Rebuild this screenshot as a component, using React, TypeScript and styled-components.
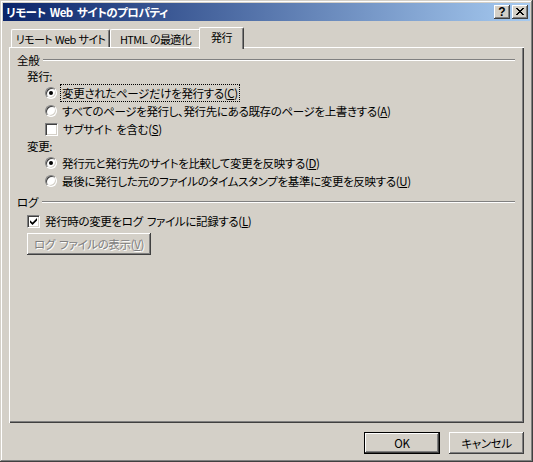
import styled, { createGlobalStyle } from "styled-components";

const GlobalStyle = createGlobalStyle`
  html, body {
    margin: 0;
    padding: 0;
    background: #d4d0c8;
  }
  body {
    font-family: "Noto Sans CJK JP", "Noto Sans", sans-serif;
    font-size: 11.5px;
    letter-spacing: -0.35px;
    word-spacing: 2px;
    font-feature-settings: "palt";
    color: #000;
  }
`;

const Window = styled.div`
  width: 533px;
  height: 462px;
  box-sizing: border-box;
  padding: 3px;
  background: #d4d0c8;
  box-shadow: inset -1px -1px #404040, inset 1px 1px #d4d0c8,
    inset -2px -2px #808080, inset 2px 2px #ffffff;
  display: flex;
  flex-direction: column;
`;

const TitleBar = styled.div`
  height: 18px;
  display: flex;
  align-items: center;
  padding: 0 2px 0 3px;
  background: linear-gradient(to right, #0a246a, #a6caf0);
`;

const TitleText = styled.span`
  flex: 1;
  color: #ffffff;
  font-weight: bold;
  font-size: 11.5px;
  letter-spacing: -0.5px;
  line-height: 18px;
  white-space: nowrap;
`;

const CaptionButtons = styled.div`
  display: flex;
  gap: 2px;
`;

const CaptionButton = styled.div`
  width: 16px;
  height: 14px;
  box-sizing: border-box;
  background: #d4d0c8;
  box-shadow: inset -1px -1px #404040, inset 1px 1px #ffffff,
    inset -2px -2px #808080, inset 2px 2px #d4d0c8;
  display: flex;
  align-items: center;
  justify-content: center;
  font-family: "Liberation Sans", sans-serif;
  font-weight: bold;
  font-size: 12px;
  letter-spacing: 0;
  line-height: 14px;
  padding-bottom: 1px;
`;

const Body = styled.div`
  flex: 1;
  display: flex;
  flex-direction: column;
  padding: 6px 6px 0 6px;
`;

const TabStrip = styled.div`
  display: flex;
  align-items: flex-end;
  height: 20px;
  padding-left: 2px;
`;

const Tab = styled.div<{ $width: number; $active?: boolean }>`
  position: relative;
  z-index: ${(p) => (p.$active ? 2 : 1)};
  width: ${(p) => p.$width}px;
  height: ${(p) => (p.$active ? 22 : 18)}px;
  margin: 0 ${(p) => (p.$active ? -2 : 0)}px ${(p) => (p.$active ? -2 : 0)}px;
  box-sizing: border-box;
  padding-bottom: ${(p) => (p.$active ? 3 : 0)}px;
  background: #d4d0c8;
  border-left: 1px solid #ffffff;
  border-top: 1px solid #ffffff;
  border-right: 1px solid #404040;
  border-radius: 2px 2px 0 0;
  box-shadow: inset -1px 0 #808080;
  display: flex;
  align-items: center;
  justify-content: center;
  overflow: hidden;
  white-space: nowrap;
  line-height: 16px;
  font-size: 11px;
  letter-spacing: -0.6px;
  word-spacing: 1px;
`;

const Panel = styled.div`
  flex: 1;
  box-sizing: border-box;
  padding: 5px 9px 0 8px;
  box-shadow: inset 1px 1px #ffffff, inset -1px -1px #404040,
    inset -2px -2px #808080;
  display: flex;
  flex-direction: column;
  align-items: flex-start;
`;

const GroupHeader = styled.div<{ $top?: number }>`
  align-self: stretch;
  display: flex;
  align-items: center;
  height: 16px;
  line-height: 16px;
  margin-top: ${(p) => p.$top ?? 0}px;
`;

const GroupRule = styled.span`
  flex: 1;
  height: 0;
  margin-left: 4px;
  border-top: 1px solid #808080;
  border-bottom: 1px solid #ffffff;
`;

const SubLabel = styled.div`
  height: 16px;
  line-height: 16px;
  padding-left: 10px;
`;

const OptionRow = styled.div<{ $indent: number; $top?: number }>`
  display: flex;
  align-items: center;
  gap: 5px;
  height: 18px;
  line-height: 16px;
  padding-left: ${(p) => p.$indent}px;
  margin-top: ${(p) => p.$top ?? 0}px;
  white-space: nowrap;
`;

const RadioMark = styled.span<{ $checked?: boolean }>`
  flex: none;
  width: 12px;
  height: 12px;
  box-sizing: border-box;
  border-radius: 50%;
  border: 1px solid;
  border-color: #808080 #ffffff #ffffff #808080;
  background: #ffffff;
  box-shadow: inset 1px 1px #404040, inset -1px -1px #d4d0c8;
  display: flex;
  align-items: center;
  justify-content: center;
  &::after {
    content: "";
    display: ${(p) => (p.$checked ? "block" : "none")};
    width: 4px;
    height: 4px;
    border-radius: 50%;
    background: #000000;
  }
`;

const CheckMark = styled.span`
  flex: none;
  width: 13px;
  height: 13px;
  box-sizing: border-box;
  border: 1px solid;
  border-color: #808080 #ffffff #ffffff #808080;
  background: #ffffff;
  box-shadow: inset 1px 1px #404040, inset -1px -1px #d4d0c8;
  display: flex;
  align-items: center;
  justify-content: center;
`;

const FocusText = styled.span`
  border: 1px dotted #000000;
  padding: 0 1px;
  margin-left: -2px;
  line-height: 14px;
`;

const PushButton = styled.div<{
  $width: number;
  $default?: boolean;
  $disabled?: boolean;
}>`
  width: ${(p) => p.$width}px;
  height: 22px;
  box-sizing: border-box;
  background: #d4d0c8;
  border: ${(p) => (p.$default ? "1px solid #000000" : "none")};
  box-shadow: inset -1px -1px #404040, inset 1px 1px #ffffff,
    inset -2px -2px #808080, inset 2px 2px #d4d0c8;
  display: flex;
  align-items: center;
  justify-content: center;
  white-space: nowrap;
  line-height: 16px;
  color: ${(p) => (p.$disabled ? "#808080" : "#000000")};
  text-shadow: ${(p) => (p.$disabled ? "1px 1px #ffffff" : "none")};
`;

const LogButton = styled(PushButton)`
  margin: 3px 0 0 10px;
`;

const Footer = styled.div`
  display: flex;
  justify-content: flex-end;
  gap: 9px;
  padding: 9px 0 5px;
`;

const closeGlyph = [
  "##....##",
  ".##..##.",
  "..####..",
  "...##...",
  "..####..",
  ".##..##.",
  "##....##",
];

const CloseIcon = () => (
  <svg width="8" height="7" viewBox="0 0 8 7" shapeRendering="crispEdges">
    {closeGlyph.flatMap((row, y) =>
      row
        .split("")
        .map((c, x) =>
          c === "#" ? (
            <rect key={`${x}-${y}`} x={x} y={y} width="1" height="1" fill="#000" />
          ) : null
        )
    )}
  </svg>
);

const CheckIcon = () => (
  <svg width="7" height="7" viewBox="0 0 7 7">
    <polygon points="0,2.3 2.5,4.6 7,0 7,2.4 2.5,7 0,4.6" fill="#000" />
  </svg>
);

const Radio = (props: { checked?: boolean; children: React.ReactNode }) => (
  <OptionRow $indent={28}>
    <RadioMark $checked={props.checked} />
    <span>{props.children}</span>
  </OptionRow>
);

export default function App() {
  return (
    <>
      <GlobalStyle />
      <Window>
        <TitleBar>
          <TitleText>リモート Web サイトのプロパティ</TitleText>
          <CaptionButtons>
            <CaptionButton>?</CaptionButton>
            <CaptionButton>
              <CloseIcon />
            </CaptionButton>
          </CaptionButtons>
        </TitleBar>
        <Body>
          <TabStrip>
            <Tab $width={99}>リモート Web サイト</Tab>
            <Tab $width={91}>HTML の最適化</Tab>
            <Tab $width={45} $active>
              発行
            </Tab>
          </TabStrip>
          <Panel>
            <GroupHeader>
              全般
              <GroupRule />
            </GroupHeader>
            <SubLabel>発行:</SubLabel>
            <Radio checked>
              <FocusText>
                変更されたページだけを発行する(<u>C</u>)
              </FocusText>
            </Radio>
            <Radio>
              すべてのページを発行し、発行先にある既存のページを上書きする(<u>A</u>)
            </Radio>
            <OptionRow $indent={28}>
              <CheckMark />
              <span>
                サブサイト を含む(<u>S</u>)
              </span>
            </OptionRow>
            <SubLabel>変更:</SubLabel>
            <Radio checked>
              発行元と発行先のサイトを比較して変更を反映する(<u>D</u>)
            </Radio>
            <Radio>
              最後に発行した元のファイルのタイムスタンプを基準に変更を反映する(<u>U</u>)
            </Radio>
            <GroupHeader $top={4}>
              ログ
              <GroupRule />
            </GroupHeader>
            <OptionRow $indent={10} $top={2}>
              <CheckMark>
                <CheckIcon />
              </CheckMark>
              <span>
                発行時の変更をログ ファイルに記録する(<u>L</u>)
              </span>
            </OptionRow>
            <LogButton $width={124} $disabled>
              ログ ファイルの表示(<u>V</u>)
            </LogButton>
          </Panel>
          <Footer>
            <PushButton $width={76} $default>
              OK
            </PushButton>
            <PushButton $width={75}>キャンセル</PushButton>
          </Footer>
        </Body>
      </Window>
    </>
  );
}
